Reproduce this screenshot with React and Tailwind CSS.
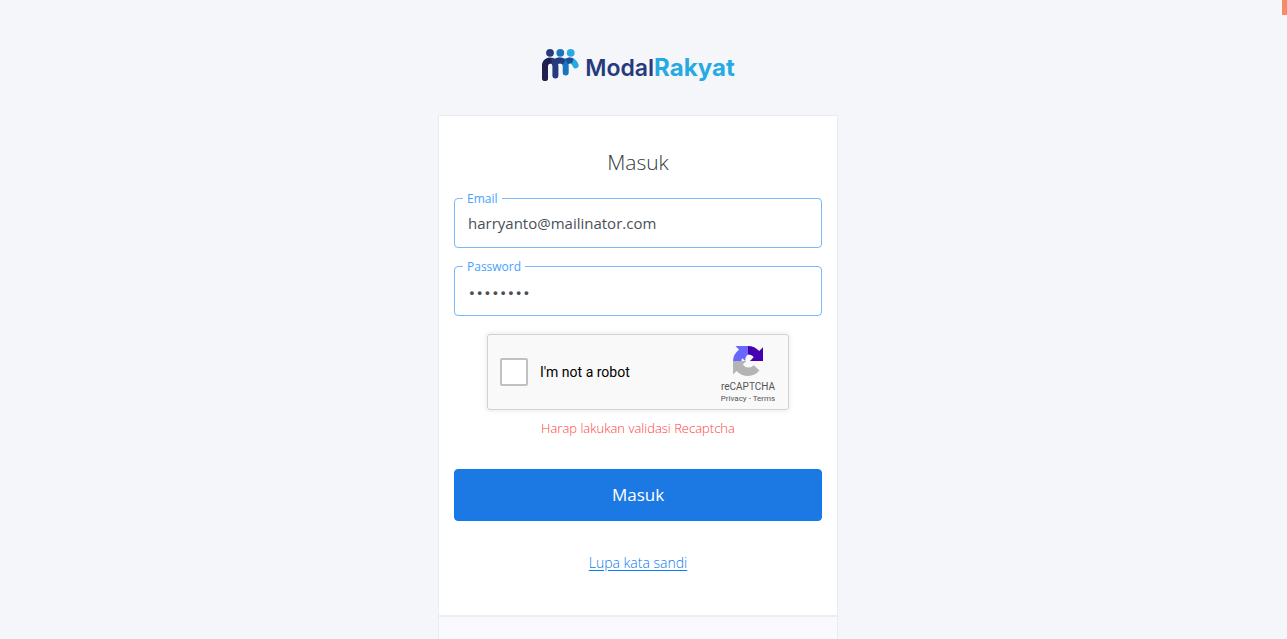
import React from "react";

function LogoMark() {
  return (
    <svg width="38" height="34" viewBox="0 0 38 34" aria-hidden="true" fill="none">
      <circle cx="9" cy="4.8" r="3.9" fill="#263a7c" />
      <circle cx="19.3" cy="4.8" r="3.9" fill="#1c75bc" />
      <circle cx="29.7" cy="4.8" r="3.9" fill="#27aae1" />
      <g strokeLinecap="round" strokeWidth="6">
        <path d="M24 13.4C30 11.5 33.4 13.6 34.6 17.4" stroke="#27aae1" />
        <path d="M15.5 13.2C21 11.4 24.7 13.8 24.7 18.2V24.5" stroke="#1c75bc" />
        <path d="M4 30V18.2C4 13.8 7 12.6 9.2 12.6C12.2 12.6 14.4 14.6 14.4 18.2V27.4" stroke="#263a7c" />
        <path d="M4 30V18.2C4 15 5.6 13.4 7.6 12.8" stroke="#211e50" />
      </g>
      <path d="M13.6 11.4C16.5 8.8 21 8.8 24.4 12L22 16.4C19.6 14.8 18 15.2 16.8 16.2Z" fill="#263a7c" />
      <path d="M24.2 11.4C26.8 9 30 9 32.6 10.8L31 15.2C29.4 14.6 28.2 15.2 27.3 16.2Z" fill="#1b4f91" />
    </svg>
  );
}

function RecaptchaMark() {
  return (
    <svg width="32" height="32" viewBox="0 0 64 64" aria-hidden="true">
      <path
        fill="#4700b0"
        d="M62 32V4.6l-7.6 7.6A30 30 0 0 0 32 2v17c5 0 9 2 11.4 5.6L36 32z"
      />
      <path
        fill="#6a67ff"
        d="M32 2H7l7 7.4A30 30 0 0 0 2 32h17c0-2.4.4-4 1.4-5.6l6.2 5.6c-.6-5.4 1.2-10.4 5.4-13z"
      />
      <path
        fill="#b4b4b4"
        d="M2 32v27l7.2-7A30 30 0 0 0 55 51L43.6 40.4A14 14 0 0 1 21.6 39L28.6 32z"
      />
    </svg>
  );
}

function Field({ id, label, type, value, inputClass }) {
  return (
    <div className="relative">
      <input
        id={id}
        name={id}
        type={type}
        defaultValue={value}
        className={`block h-[50px] w-full rounded border border-[#7ab8fb] bg-white px-[13px] text-[#495057] outline-none focus:border-[#1c78e3] ${inputClass}`}
      />
      <label
        htmlFor={id}
        className="absolute -top-[7px] left-[9px] bg-white px-1 text-xs leading-4 text-[#45a1ff]"
      >
        {label}
      </label>
    </div>
  );
}

function Recaptcha() {
  return (
    <div className="flex h-[76px] w-[302px] max-w-full items-center self-center rounded-[3px] border border-[#d3d3d3] bg-[#f9f9f9] pr-[10px] pl-3 font-[Roboto,sans-serif] shadow-[0_0_4px_1px_rgba(0,0,0,0.08)]">
      <input
        id="robot"
        type="checkbox"
        className="h-7 w-7 appearance-none rounded-xs border-2 border-[#c1c1c1] bg-white checked:bg-[#1c78e3]"
      />
      <label htmlFor="robot" className="ml-3 flex-1 text-sm text-black">
        I'm not a robot
      </label>
      <div className="flex w-15 flex-col items-center pt-[6px] text-[#555555]">
        <RecaptchaMark />
        <span className="mt-1 text-[10px] leading-3">reCAPTCHA</span>
        <span className="text-[8px] leading-3 whitespace-nowrap">
          <a href="#privacy">Privacy</a> - <a href="#terms">Terms</a>
        </span>
      </div>
    </div>
  );
}

export default function App() {
  return (
    <div className="flex min-h-screen bg-[#f4f6fa] font-['Open_Sans',sans-serif]">
      <main className="flex flex-1 flex-col items-center">
        <a href="#home" className="mt-12 flex h-[34px] items-center gap-[6px]">
          <LogoMark />
          <span className="pt-[6px] font-[Inter,sans-serif] text-[23px] leading-7 font-semibold text-[#263a7c]">
            Modal<span className="text-2xl leading-7 font-bold text-[#27aae1]">Rakyat</span>
          </span>
        </a>

        <section className="mt-[33px] flex w-full max-w-[400px] flex-1 flex-col border border-b-0 border-[#e9ecf4] bg-white">
          <form className="flex flex-col px-[15px] pt-8 pb-10">
            <h1 className="text-center text-[21px] leading-7 font-light text-[#343a40]">Masuk</h1>
            <div className="mt-[22px] flex flex-col gap-[18px]">
              <Field id="email" label="Email" type="email" value="harryanto@mailinator.com" inputClass="text-[15px]" />
              <Field
                id="password"
                label="Password"
                type="password"
                value="password"
                inputClass="pt-1 font-['Liberation_Mono',monospace] text-[13px] font-bold"
              />
              <Recaptcha />
            </div>
            <p className="mt-2 text-center text-[13px] leading-5 font-light text-[#ff4040]">
              Harap lakukan validasi Recaptcha
            </p>
            <button
              type="submit"
              className="mt-[31px] h-[52px] rounded border border-[#0a7cf5] bg-[#1c78e3] text-[17px] text-white"
            >
              Masuk
            </button>
            <a
              href="#reset"
              className="mt-[30px] self-center text-sm leading-6 font-light text-[#0a7cf5] underline underline-offset-2"
            >
              Lupa kata sandi
            </a>
          </form>
          <div className="min-h-6 flex-1 border-t-2 border-[#e9eef4] bg-[#fafafe]" />
        </section>
      </main>
      <div className="flex w-[11px] justify-end">
        <div className="h-[15px] w-[5px] bg-[#f58c69]" />
      </div>
    </div>
  );
}
